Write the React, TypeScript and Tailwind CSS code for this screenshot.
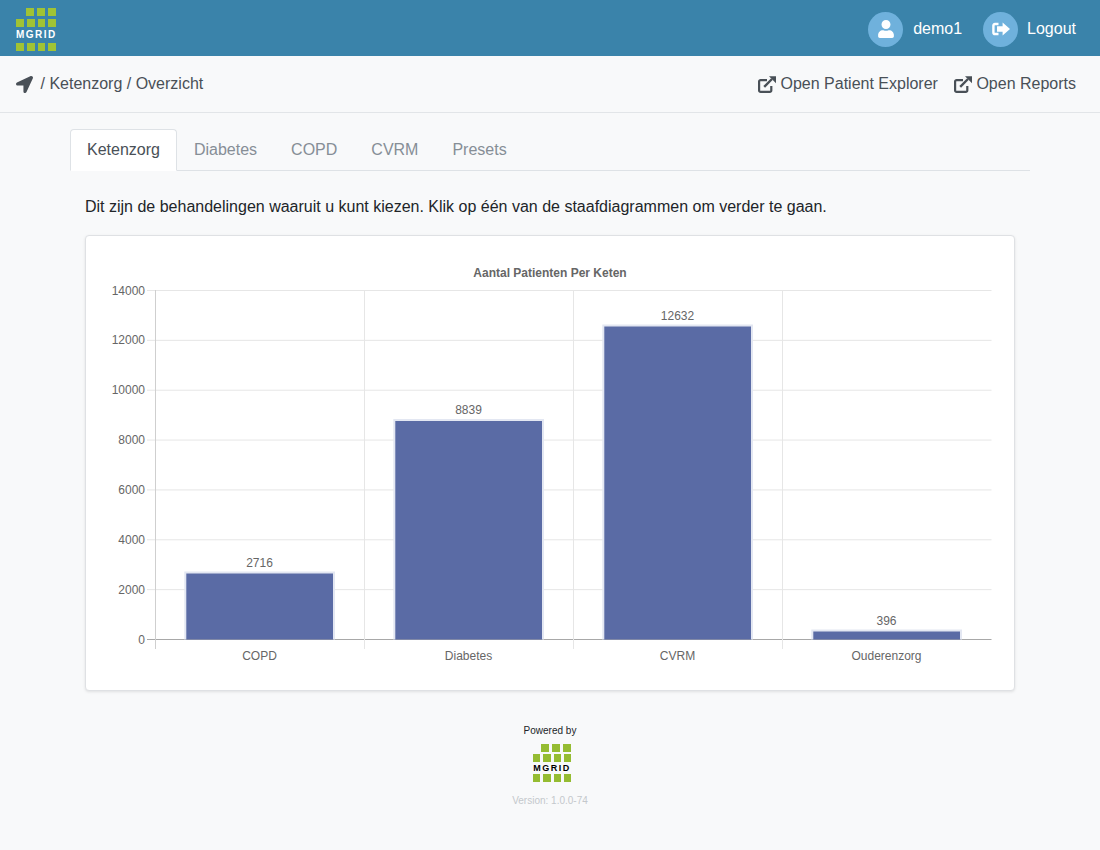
import { FaLocationArrow, FaUser } from 'react-icons/fa';

const BARS = [
  { label: 'COPD', value: 2716, x: 185 },
  { label: 'Diabetes', value: 8839, x: 394 },
  { label: 'CVRM', value: 12632, x: 603 },
  { label: 'Ouderenzorg', value: 396, x: 812 },
];

const TICKS = [0, 2000, 4000, 6000, 8000, 10000, 12000, 14000];
const BASE_Y = 639.5;
const TOP_Y = 290.5;
const valueToY = (value: number) => BASE_Y - (value / 14000) * (BASE_Y - TOP_Y);

function ExternalLinkIcon() {
  return (
    <svg width="18" height="17" viewBox="0 0 18 17" className="ml-px shrink-0">
      <path
        d="M9 4.1H2.6a1.5 1.5 0 0 0-1.5 1.5v8.8a1.5 1.5 0 0 0 1.5 1.5h9.2a1.5 1.5 0 0 0 1.5-1.5V10"
        fill="none"
        stroke="currentColor"
        strokeWidth="2.2"
      />
      <path d="M6.2 10.8 14 3" fill="none" stroke="currentColor" strokeWidth="2.4" />
      <path d="M11 .3h7v7z" fill="currentColor" />
    </svg>
  );
}

function LogoutIcon() {
  return (
    <svg width="18" height="14" viewBox="0 0 18 14">
      <path d="M6.5 2H3a1.6 1.6 0 0 0-1.6 1.6v6.8A1.6 1.6 0 0 0 3 12h3.5" fill="none" stroke="white" strokeWidth="2.4" />
      <path d="M5 4.2h5.6V.5L18 7l-7.4 6.5V9.8H5z" fill="white" />
    </svg>
  );
}

function Logo({ dark }: { dark?: boolean }) {
  const row = 'flex gap-[3px]';
  const cell = dark ? 'w-2 h-2 bg-[#95bc32]' : 'w-2 h-2 bg-[#a0c334]';
  return (
    <div className={dark ? 'flex w-[38px] flex-col gap-[2px]' : 'flex w-10 flex-col gap-[3px]'}>
      <div className={`${row} justify-end ${dark ? 'gap-[2px]' : ''}`}>
        <div className={cell} />
        <div className={cell} />
        <div className={cell} />
      </div>
      <div className={`${row} justify-between`}>
        <div className={cell} />
        <div className={cell} />
        <div className={cell} />
        <div className={cell} />
      </div>
      <div
        className={
          dark
            ? 'h-2 text-center text-[9px] leading-2 font-bold tracking-[1.5px] whitespace-nowrap text-black'
            : 'h-[10px] text-center text-[10px] leading-[10px] font-bold tracking-[1.5px] whitespace-nowrap text-white'
        }
      >
        MGRID
      </div>
      <div className={`${row} justify-between`}>
        <div className={cell} />
        <div className={cell} />
        <div className={cell} />
        <div className={cell} />
      </div>
    </div>
  );
}

function BarChart() {
  const gridX = [155.5, 364.5, 573.5, 782.5];
  return (
    <svg width="928" height="454" viewBox="86 236 928 454" className="block" fontFamily="'Liberation Sans', sans-serif">
      <text x="550" y="277" textAnchor="middle" fontSize="12" fontWeight="700" fill="#666">
        Aantal Patienten Per Keten
      </text>
      {TICKS.map((tick) => (
        <g key={tick}>
          <line
            x1="147"
            x2="991.5"
            y1={valueToY(tick)}
            y2={valueToY(tick)}
            stroke={tick === 0 ? '#a8a8a8' : '#e6e6e6'}
          />
          <text x="145" y={valueToY(tick) + 4} textAnchor="end" fontSize="12" fill="#666">
            {tick}
          </text>
        </g>
      ))}
      {gridX.map((x, i) => (
        <line key={x} x1={x} x2={x} y1="290" y2="649" stroke={i === 0 ? '#cfcfcf' : '#e6e6e6'} />
      ))}
      {BARS.map((bar) => {
        const top = valueToY(bar.value);
        return (
          <g key={bar.label}>
            <rect x={bar.x} y={top + 1} width="149" height={BASE_Y - top - 1} fill="#5a6ba5" />
            <path
              d={`M${bar.x + 0.3} ${BASE_Y}V${top + 0.8}H${bar.x + 149}V${BASE_Y}`}
              fill="none"
              stroke="#e3e7f2"
              strokeWidth="2"
            />
            <text x={bar.x + 74.5} y={top - 5} textAnchor="middle" fontSize="12" fill="#666">
              {bar.value}
            </text>
            <text x={bar.x + 74.5} y="660" textAnchor="middle" fontSize="12" fill="#666">
              {bar.label}
            </text>
          </g>
        );
      })}
    </svg>
  );
}

export default function App() {
  const tabs = ['Diabetes', 'COPD', 'CVRM', 'Presets'];

  return (
    <div className="min-h-screen bg-[#f8f9fa] font-['Liberation_Sans',sans-serif] text-base text-[#212529]">
      <header className="flex h-14 items-center justify-between bg-[#3a83aa] pt-[2px] pr-6 pl-4">
        <Logo />
        <div className="flex items-center text-white">
          <span className="flex h-[35px] w-[35px] items-center justify-center rounded-full bg-[#6fb1dc]">
            <FaUser size={18} />
          </span>
          <span className="ml-[10px]">demo1</span>
          <span className="ml-[21px] flex h-[35px] w-[35px] items-center justify-center rounded-full bg-[#6fb1dc]">
            <LogoutIcon />
          </span>
          <span className="ml-[9px]">Logout</span>
        </div>
      </header>

      <nav className="flex h-[57px] items-center justify-between border-b border-[#e2e5e8] pr-6 pl-4 text-[#495057]">
        <div className="flex items-center">
          <FaLocationArrow size={17} />
          <span className="ml-[7.5px]">/ Ketenzorg / Overzicht</span>
        </div>
        <div className="flex items-center">
          <a className="flex items-center gap-1">
            <ExternalLinkIcon />
            Open Patient Explorer
          </a>
          <a className="ml-[15.5px] flex items-center gap-1">
            <ExternalLinkIcon />
            Open Reports
          </a>
        </div>
      </nav>

      <main className="mx-auto w-[960px] pt-4">
        <ul className="flex border-b border-[#dee2e6]">
          <li className="-mb-px rounded-t border border-[#dee2e6] border-b-white bg-white px-4 py-2 text-[#495057]">
            Ketenzorg
          </li>
          {tabs.map((tab) => (
            <li key={tab} className="-mb-px border border-transparent px-4 py-2 text-[#868e96]">
              {tab}
            </li>
          ))}
        </ul>

        <p className="mt-6 px-[15px]">
          Dit zijn de behandelingen waaruit u kunt kiezen. Klik op één van de staafdiagrammen om verder te gaan.
        </p>

        <div className="mx-[15px] mt-4 rounded border border-[#dfe1e4] bg-white shadow-[0_1px_3px_rgba(0,0,0,0.1)]">
          <BarChart />
        </div>

        <footer className="mt-[34px] flex flex-col items-center">
          <span className="text-[10px] leading-3">Powered by</span>
          <div className="mt-[7px] ml-1">
            <Logo dark />
          </div>
          <span className="mt-[13px] text-[10px] leading-3 text-[#c4c8cc]">Version: 1.0.0-74</span>
        </footer>
      </main>
    </div>
  );
}
